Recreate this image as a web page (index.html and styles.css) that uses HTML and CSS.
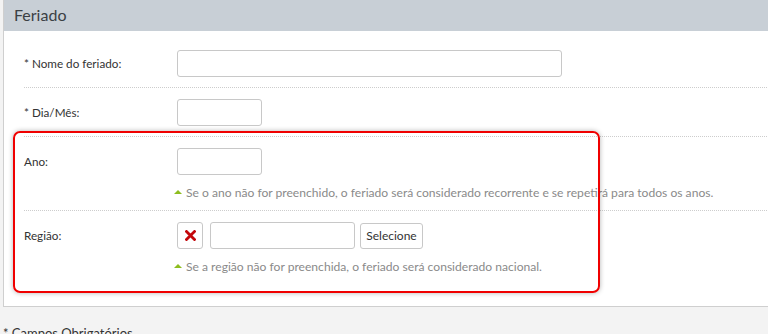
FILE: index.html
```html
<!DOCTYPE html>
<html lang="pt">
<head>
<meta charset="utf-8">
<link rel="stylesheet" href="styles.css">
</head>
<body>
<div class="panel">
  <div class="panel-head">Feriado</div>
  <div class="panel-body">
    <div class="row">
      <label class="lbl">* Nome do feriado:</label>
      <div class="field"><input class="inp inp-long" type="text"></div>
    </div>
    <div class="row">
      <label class="lbl">* Dia/Mês:</label>
      <div class="field"><input class="inp inp-short" type="text"></div>
    </div>
    <div class="row">
      <label class="lbl">Ano:</label>
      <div class="field">
        <input class="inp inp-short" type="text">
        <div class="hint"><span class="tri"></span>Se o ano não for preenchido, o feriado será considerado recorrente e se repetirá para todos os anos.</div>
      </div>
    </div>
    <div class="row">
      <label class="lbl">Região:</label>
      <div class="field">
        <div class="inline">
          <button class="btn-x" type="button"><svg width="11" height="11" viewBox="0 0 11 11"><path d="M1.5 1.5 L9.5 9.5 M9.5 1.5 L1.5 9.5" stroke="#c4070b" stroke-width="2.8" stroke-linecap="square"/></svg></button>
          <input class="inp inp-mid" type="text">
          <button class="btn" type="button">Selecione</button>
        </div>
        <div class="hint"><span class="tri"></span>Se a região não for preenchida, o feriado será considerado nacional.</div>
      </div>
    </div>
  </div>
</div>
<p class="req">* Campos Obrigatórios</p>
<div class="highlight"></div>
</body>
</html>
```
FILE: styles.css
```css
html, body {
  margin: 0;
  padding: 0;
}
body {
  background: #f3f3f3;
  font-family: "Lato", "Open Sans", sans-serif;
  color: #333;
  overflow: hidden;
  width: 768px;
  height: 334px;
  position: relative;
}
.panel {
  margin-left: 3px;
  margin-right: -20px;
  background: #fff;
  border: 1px solid #cfcfcf;
  border-top: 0;
}
.panel-head {
  height: 31px;
  background: #c8cfd6;
  font-size: 16px;
  line-height: 30px;
  padding-left: 10px;
  color: #3b3f44;
}
.panel-body {
  padding: 8px 0 22px 20px;
}
.row {
  display: flex;
  padding: 11px 0 10px;
  border-top: 1px dotted #cdcdcd;
}
.row:first-child {
  border-top: 0;
}
.lbl {
  width: 153px;
  font-size: 11.7px;
  line-height: 27px;
  color: #333;
}
.field {
  display: flex;
  flex-direction: column;
}
.inp {
  box-sizing: border-box;
  height: 27px;
  border: 1px solid #c8c8c8;
  border-radius: 3px;
  background: #fff;
  margin: 0;
}
.inp-long { width: 385px; }
.inp-short { width: 85px; }
.inp-mid { width: 145px; }
.hint {
  margin-top: 10px;
  font-size: 12.1px;
  color: #8a8a8a;
  line-height: 15px;
  margin-left: -3px;
  white-space: nowrap;
}
.tri {
  display: inline-block;
  width: 0;
  height: 0;
  border-left: 4px solid transparent;
  border-right: 4px solid transparent;
  border-bottom: 4px solid #8dbd1f;
  margin-right: 4px;
  vertical-align: 3px;
}
.inline {
  display: flex;
  align-items: center;
  gap: 7px;
}
.btn-x {
  box-sizing: border-box;
  width: 26px;
  height: 27px;
  border: 1px solid #c8c8c8;
  border-radius: 3px;
  background: #fff;
  padding: 0;
  display: flex;
  align-items: center;
  justify-content: center;
}
.btn {
  box-sizing: border-box;
  height: 26px;
  width: 63px;
  border: 1px solid #c8c8c8;
  border-radius: 3px;
  background: #fff;
  font-family: inherit;
  font-size: 12px;
  color: #333;
  padding: 0;
  margin-left: -2px;
}
.req {
  margin: 18px 0 0 3px;
  font-size: 13px;
  color: #333;
}
.highlight {
  position: absolute;
  left: 13px;
  top: 131px;
  width: 583px;
  height: 158px;
  border: 2px solid #f00000;
  border-radius: 7px;
  box-shadow: 0 0 5px rgba(0,0,0,0.3);
}
```
